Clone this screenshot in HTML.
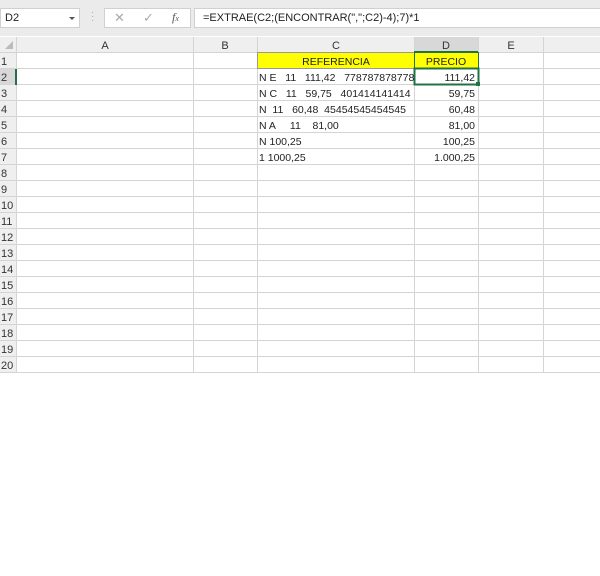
<!DOCTYPE html>
<html><head><style>
body{margin:0;width:600px;height:576px;background:#fff;font-family:"Liberation Sans",Arial,sans-serif;position:relative;overflow:hidden}
.a{position:absolute}
.t{font-size:11px;color:#222;white-space:nowrap}
svg text{white-space:pre}
</style></head><body>
<div class="a" style="left:0;top:0;width:600px;height:36px;background:#ebebeb"></div>
<div class="a" style="left:0;top:8px;width:80px;height:20px;background:#fff;border:1px solid #d0d0d0;box-sizing:border-box"></div>
<div class="a t" style="left:5px;top:12px;font-size:11px">D2</div>
<div class="a" style="left:69px;top:17px;width:0;height:0;border-left:3px solid transparent;border-right:3px solid transparent;border-top:3px solid #555"></div>
<div class="a" style="left:91px;top:11px;color:#aaa;font-size:10px;line-height:4px">·<br>·<br>·</div>
<div class="a" style="left:104px;top:8px;width:87px;height:20px;background:#fff;border:1px solid #d0d0d0;box-sizing:border-box"></div>
<div class="a" style="left:114px;top:10px;color:#aaa;font-size:13px">✕</div>
<div class="a" style="left:143px;top:10px;color:#aaa;font-size:13px">✓</div>
<div class="a" style="left:172px;top:10px;color:#555;font-size:12px;font-style:italic;font-family:'Liberation Serif',serif">f<span style="font-size:8px">x</span></div>
<div class="a" style="left:194px;top:8px;width:406px;height:20px;background:#fff;border:1px solid #d0d0d0;border-right:none;box-sizing:border-box"></div>
<div class="a t" style="left:203px;top:12px">=EXTRAE(C2;(ENCONTRAR(",";C2)-4);7)*1</div>
<svg class="a" style="left:0;top:37px" width="600" height="340">
<rect x="0" y="0" width="600" height="16" fill="#efefef"/>
<rect x="0" y="0" width="16" height="336" fill="#efefef"/>
<rect x="414" y="0" width="64" height="16" fill="#d8d8d8"/>
<rect x="0" y="32" width="16" height="16" fill="#d8d8d8"/>
<polygon points="5,12 13,12 13,4" fill="#bbb"/>
<g stroke="#d4d4d4" stroke-width="1">
<line x1="16.5" y1="0" x2="16.5" y2="336"/>
<line x1="193.5" y1="0" x2="193.5" y2="336"/>
<line x1="257.5" y1="0" x2="257.5" y2="336"/>
<line x1="414.5" y1="0" x2="414.5" y2="336"/>
<line x1="478.5" y1="0" x2="478.5" y2="336"/>
<line x1="543.5" y1="0" x2="543.5" y2="336"/>
<line x1="0" y1="15.5" x2="600" y2="15.5"/>
<line x1="0" y1="31.5" x2="600" y2="31.5"/><line x1="0" y1="47.5" x2="600" y2="47.5"/><line x1="0" y1="63.5" x2="600" y2="63.5"/><line x1="0" y1="79.5" x2="600" y2="79.5"/><line x1="0" y1="95.5" x2="600" y2="95.5"/><line x1="0" y1="111.5" x2="600" y2="111.5"/><line x1="0" y1="127.5" x2="600" y2="127.5"/><line x1="0" y1="143.5" x2="600" y2="143.5"/><line x1="0" y1="159.5" x2="600" y2="159.5"/><line x1="0" y1="175.5" x2="600" y2="175.5"/><line x1="0" y1="191.5" x2="600" y2="191.5"/><line x1="0" y1="207.5" x2="600" y2="207.5"/><line x1="0" y1="223.5" x2="600" y2="223.5"/><line x1="0" y1="239.5" x2="600" y2="239.5"/><line x1="0" y1="255.5" x2="600" y2="255.5"/><line x1="0" y1="271.5" x2="600" y2="271.5"/><line x1="0" y1="287.5" x2="600" y2="287.5"/><line x1="0" y1="303.5" x2="600" y2="303.5"/><line x1="0" y1="319.5" x2="600" y2="319.5"/><line x1="0" y1="335.5" x2="600" y2="335.5"/>
</g>
<rect x="257" y="16" width="221" height="16" fill="#ffff00"/>
<rect x="257.5" y="15.5" width="157" height="16" fill="none" stroke="#999" stroke-width="1"/>
<rect x="414.5" y="15.5" width="64" height="16" fill="none" stroke="#217346" stroke-width="1"/>
<rect x="414.5" y="31.5" width="64" height="16" fill="none" stroke="#217346" stroke-width="2"/>
<rect x="476" y="45" width="4" height="4" fill="#217346"/>
<line x1="16" y1="32" x2="16" y2="48" stroke="#217346" stroke-width="2"/>
<line x1="414" y1="15" x2="478" y2="15" stroke="#217346" stroke-width="2"/>
<g font-family="Liberation Sans,Arial,sans-serif" font-size="11" fill="#333" text-anchor="middle">
<text x="105" y="12">A</text><text x="225" y="12">B</text><text x="336" y="12">C</text><text x="446" y="12">D</text><text x="511" y="12">E</text>
</g>
<g font-family="Liberation Sans,Arial,sans-serif" font-size="11" fill="#333">
<text x="1" y="28">1</text><text x="1" y="44">2</text><text x="1" y="60">3</text><text x="1" y="76">4</text><text x="1" y="92">5</text><text x="1" y="108">6</text><text x="1" y="124">7</text><text x="1" y="140">8</text><text x="1" y="156">9</text><text x="1" y="172">10</text><text x="1" y="188">11</text><text x="1" y="204">12</text><text x="1" y="220">13</text><text x="1" y="236">14</text><text x="1" y="252">15</text><text x="1" y="268">16</text><text x="1" y="284">17</text><text x="1" y="300">18</text><text x="1" y="316">19</text><text x="1" y="332">20</text>
</g>
<g font-family="Liberation Sans,Arial,sans-serif" font-size="10.5" fill="#222">
<text x="336" y="28" text-anchor="middle">REFERENCIA</text>
<text x="446" y="28" text-anchor="middle">PRECIO</text>
<text x="259" y="44">N E   11   111,42   778787878778</text>
<text x="259" y="60">N C   11   59,75   401414141414</text>
<text x="259" y="76">N  11   60,48  45454545454545</text>
<text x="259" y="92">N A     11    81,00</text>
<text x="259" y="108">N 100,25</text>
<text x="259" y="124">1 1000,25</text>
<g text-anchor="end"><text x="475" y="44">111,42</text><text x="475" y="60">59,75</text><text x="475" y="76">60,48</text><text x="475" y="92">81,00</text><text x="475" y="108">100,25</text><text x="475" y="124">1.000,25</text></g>
</g>
</svg>
</body></html>
